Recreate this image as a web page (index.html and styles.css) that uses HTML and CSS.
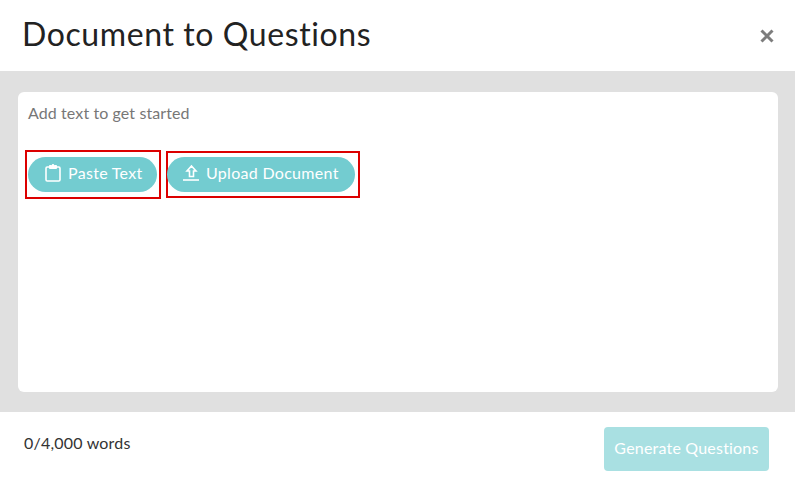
FILE: index.html
```html
<!DOCTYPE html>
<html lang="en">
<head>
<meta charset="utf-8">
<title>Document to Questions</title>
<link rel="stylesheet" href="styles.css">
</head>
<body>
<div class="modal">
  <header class="modal-header">
    <h1 class="modal-title">Document to Questions</h1>
    <svg class="close-icon" viewBox="0 0 14 14" width="14" height="14" aria-label="Close"><path d="M1.500 1.500 12.500 12.500M12.500 1.500 1.500 12.500"/></svg>
  </header>
  <main class="modal-body">
    <section class="card">
      <p class="hint">Add text to get started</p>
      <div class="actions">
        <div class="highlight highlight-paste">
          <button class="pill pill-paste" type="button">
            <svg class="icon" viewBox="0 0 16 18" width="16" height="18"><rect x="1" y="3" width="14" height="14" rx="1.200"/><path class="solid" d="M4.500 1.500H6.500C6.800 .8 7.300 .6 8 .6S9.200 .8 9.500 1.500H11.500V4.500H4.500Z"/></svg>
            Paste Text
          </button>
        </div>
        <div class="highlight highlight-upload">
          <button class="pill pill-upload" type="button">
            <svg class="icon" viewBox="0 0 18 18" width="18" height="18"><path d="M9.500 2 14 7H11.500V12.500H7.500V7H5Z"/><path d="M1 16H17"/></svg>
            Upload Document
          </button>
        </div>
      </div>
    </section>
  </main>
  <footer class="modal-footer">
    <span class="count">0/4,000 words</span>
    <button class="generate" type="button" disabled>Generate Questions</button>
  </footer>
</div>
</body>
</html>
```
FILE: styles.css
```css
* { box-sizing: border-box; }
html, body { margin: 0; height: 100%; }
body { background: #fff; font-family: "Lato", "Open Sans", sans-serif; }
.modal { display: flex; flex-direction: column; width: 795px; height: 484px; overflow: hidden; }
.modal-header { flex: 0 0 71px; display: flex; align-items: center; justify-content: space-between; padding: 0 21px 3px 22px; }
.modal-title { margin: 0; font-size: 32px; font-weight: 400; color: #222; line-height: 40px; letter-spacing: .6px; }
.close-icon { margin-top: 3px; fill: none; stroke: #7d7d7d; stroke-width: 3px; }
.modal-body { flex: 0 0 341px; background: #e0e0e0; padding: 21px 17px 20px 18px; }
.card { height: 300px; background: #fff; border-radius: 6px; padding: 11px 10px; }
.hint { margin: 0; font-size: 16px; line-height: 20px; color: #777; letter-spacing: .1px; }
.actions { display: flex; align-items: flex-start; gap: 5px; margin-top: 27px; margin-left: -3px; }
.highlight { display: flex; border: 2px solid #dc0000; }
.highlight-paste { width: 136px; height: 49px; padding: 5px 0 0 1px; }
.highlight-upload { width: 194px; height: 47px; margin-top: 1px; padding: 4px 0 0 0; }
.pill { display: flex; align-items: center; height: 35px; border: 0; border-radius: 18px; background: #73ccd0; color: #fff; font: inherit; font-size: 16px; letter-spacing: .3px; white-space: nowrap; }
.pill-paste { gap: 7px; width: 129px; padding: 0 0 4px 17px; }
.pill-upload { gap: 6px; width: 188px; margin-left: -1px; padding: 0 0 4px 15px; }
.icon { flex: none; fill: none; stroke: #fff; stroke-width: 1.600px; }
.icon .solid { fill: #fff; stroke-width: 1px; }
.modal-footer { flex: 1; display: flex; align-items: flex-start; justify-content: space-between; padding: 15px 26px 0 24px; }
.count { margin-top: 6px; font-size: 16px; line-height: 20px; color: #333; letter-spacing: .2px; }
.generate { width: 165px; height: 44px; padding: 0 0 4px; border: 0; border-radius: 4px; background: #a9e0e2; color: #fff; font: inherit; font-size: 16px; letter-spacing: .2px; }
```
